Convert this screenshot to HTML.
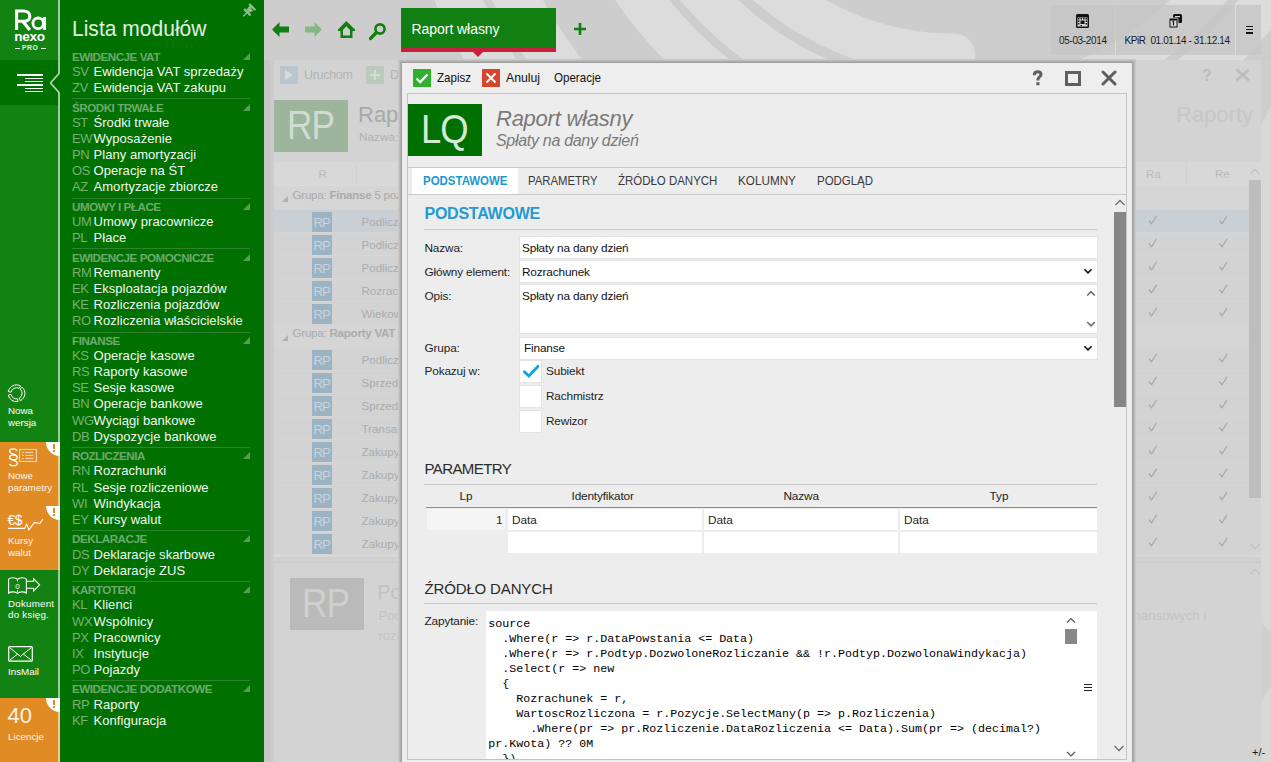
<!DOCTYPE html>
<html><head><meta charset="utf-8"><style>
html,body{margin:0;padding:0;}
body{width:1271px;height:762px;overflow:hidden;position:relative;background:#cdcdcd;font-family:"Liberation Sans",sans-serif;}
.b{position:absolute;}
.t{position:absolute;white-space:pre;}
</style></head><body>
<svg class="b" style="left:0;top:0" width="1271" height="762" viewBox="0 0 1271 762">
<rect width="1271" height="762" fill="#cdcdcd"/>
<g fill="none" stroke="#dcdcdc">
<circle cx="954" cy="-227.5" r="545.35" stroke-width="44.5"/>
<circle cx="954" cy="-227.5" r="492.4" stroke-width="45.2"/>
<circle cx="954" cy="-227.5" r="386.2" stroke-width="43.6"/>
<circle cx="954" cy="-227.5" r="334.75" stroke-width="42.5"/>
<path d="M 671.75 -227.5 A 282.25 282.25 0 0 0 954 54.75" stroke-width="42.5" stroke-linecap="round"/>
</g>
</svg><div class="b" style="left:0;top:0;width:58px;height:762px;background:#128212"></div><div class="b" style="left:0;top:60px;width:58px;height:45px;background:#007000"></div><div class="b" style="left:0;top:442px;width:58px;height:128px;background:#e08b24"></div><div class="b" style="left:0;top:698px;width:58px;height:64px;background:#e08b24"></div><div class="b" style="left:58px;top:0;width:206px;height:762px;background:#007000"></div><svg class="b" style="left:50px;top:0" width="12" height="762" viewBox="50 0 12 762">
<polyline points="59,0 59,73.5 50.5,83 59,92.5 59,762" fill="none" stroke="#acd6ac" stroke-width="1.8"/>
</svg><div class="b" style="left:58px;top:442px;width:2px;height:128px;background:#f0c89a"></div><div class="b" style="left:58px;top:698px;width:2px;height:64px;background:#f0c89a"></div><svg class="b" style="left:0;top:0" width="58" height="60" viewBox="0 0 58 60">
<g fill="none" stroke="#ffffff">
<path d="M16.6 30 V11 H23.5 C27.5 11 29.8 13.2 29.8 16.2 C29.8 19.3 27.5 21.3 23.5 21.3 H16.6" stroke-width="3.1"/>
<path d="M22.5 21 L29.8 30" stroke-width="3.2"/>
<circle cx="38.2" cy="23.3" r="5.3" stroke-width="2.8"/>
<path d="M44.6 17 V30" stroke-width="2.8"/>
</g>
</svg><div class="t" style="left:14.2px;top:28.29px;font-size:13.6px;line-height:17px;color:#ffffff;font-weight:700;font-style:normal;font-family:'Liberation Sans';letter-spacing:-0.25px;">nexo</div><div class="b" style="left:15px;top:48px;width:5px;height:1px;background:#e8f3e8"></div><div class="b" style="left:41px;top:48px;width:5px;height:1px;background:#e8f3e8"></div><div class="t" style="left:22px;top:44.34px;font-size:6.8px;line-height:8px;color:#e8f3e8;font-weight:700;font-style:normal;font-family:'Liberation Sans';letter-spacing:0.5px;">PRO</div><div class="b" style="left:17px;top:74px;width:26px;height:2px;background:#ffffff"></div><div class="b" style="left:25px;top:78px;width:18px;height:1px;background:#ffffff"></div><div class="b" style="left:25px;top:81px;width:18px;height:1px;background:#ffffff"></div><div class="b" style="left:17px;top:84px;width:26px;height:2px;background:#ffffff"></div><div class="b" style="left:25px;top:88px;width:18px;height:1px;background:#ffffff"></div><div class="b" style="left:25px;top:91px;width:18px;height:1px;background:#ffffff"></div><div class="t" style="left:8px;top:405.20px;font-size:9.8px;line-height:12px;color:#ffffff;font-weight:400;font-style:normal;font-family:'Liberation Sans';">Nowa</div><div class="t" style="left:8px;top:417.20px;font-size:9.8px;line-height:12px;color:#ffffff;font-weight:400;font-style:normal;font-family:'Liberation Sans';">wersja</div><div class="t" style="left:8px;top:469.60px;font-size:9.8px;line-height:12px;color:#fff3e6;font-weight:400;font-style:normal;font-family:'Liberation Sans';">Nowe</div><div class="t" style="left:8px;top:481.60px;font-size:9.8px;line-height:12px;color:#fff3e6;font-weight:400;font-style:normal;font-family:'Liberation Sans';">parametry</div><div class="t" style="left:8px;top:534.60px;font-size:9.8px;line-height:12px;color:#fff3e6;font-weight:400;font-style:normal;font-family:'Liberation Sans';">Kursy</div><div class="t" style="left:8px;top:546.60px;font-size:9.8px;line-height:12px;color:#fff3e6;font-weight:400;font-style:normal;font-family:'Liberation Sans';">walut</div><div class="t" style="left:8px;top:597.60px;font-size:9.8px;line-height:12px;color:#ffffff;font-weight:400;font-style:normal;font-family:'Liberation Sans';letter-spacing:0.2px;">Dokument</div><div class="t" style="left:8px;top:609.10px;font-size:9.8px;line-height:12px;color:#ffffff;font-weight:400;font-style:normal;font-family:'Liberation Sans';letter-spacing:0.2px;">do księg.</div><div class="t" style="left:8px;top:666.10px;font-size:9.8px;line-height:12px;color:#ffffff;font-weight:400;font-style:normal;font-family:'Liberation Sans';">InsMail</div><div class="t" style="left:7.5px;top:702.18px;font-size:22px;line-height:28px;color:#fff3e6;font-weight:400;font-style:normal;font-family:'Liberation Sans';">40</div><div class="t" style="left:8px;top:731.00px;font-size:9.8px;line-height:12px;color:#fff3e6;font-weight:400;font-style:normal;font-family:'Liberation Sans';">Licencje</div><div class="b" style="left:46px;top:428px;width:28px;height:28px;border-radius:50%;background:#ffffff;clip-path:inset(14px 14px 0 0)"></div><div class="b" style="left:53px;top:444px;width:2px;height:4.6px;background:#e08b24"></div><div class="b" style="left:53px;top:450px;width:2px;height:2px;background:#e08b24"></div><div class="b" style="left:46px;top:492px;width:28px;height:28px;border-radius:50%;background:#ffffff;clip-path:inset(14px 14px 0 0)"></div><div class="b" style="left:53px;top:508px;width:2px;height:4.6px;background:#e08b24"></div><div class="b" style="left:53px;top:514px;width:2px;height:2px;background:#e08b24"></div><div class="b" style="left:46px;top:684px;width:28px;height:28px;border-radius:50%;background:#ffffff;clip-path:inset(14px 14px 0 0)"></div><div class="b" style="left:53px;top:700px;width:2px;height:4.6px;background:#e08b24"></div><div class="b" style="left:53px;top:706px;width:2px;height:2px;background:#e08b24"></div><svg class="b" style="left:0;top:370px" width="58" height="400" viewBox="0 370 58 400" fill="none" stroke="#ffffff" stroke-width="1.1">
<g stroke-width="1"><path d="M8.28 391.55 A8.4 8.4 0 0 1 20.44 385.88 L19.13 388.36 A5.6 5.6 0 0 0 11.02 392.14 Z"/><path d="M22.12 387.06 A8.4 8.4 0 0 1 20.44 400.72 L19.13 398.24 A5.6 5.6 0 0 0 20.25 389.14 Z"/><path d="M17.96 401.57 A8.4 8.4 0 0 1 8.28 395.05 L11.02 394.46 A5.6 5.6 0 0 0 17.47 398.81 Z"/></g>
<path d="M17.18 450.80 C16.34 449.40 14.91 448.90 13.40 448.90 C10.88 448.90 9.62 450.10 9.62 451.60 C9.62 454.10 17.35 454.30 17.35 457.10 C17.35 458.80 15.50 459.90 13.23 459.90 C11.55 459.90 10.04 459.30 9.37 458.10" stroke-width="1.25"/><path d="M17.18 456.80 C16.34 455.40 14.91 454.90 13.40 454.90 C10.88 454.90 9.62 456.10 9.62 457.60 C9.62 460.10 17.35 460.30 17.35 463.10 C17.35 464.80 15.50 465.90 13.23 465.90 C11.55 465.90 10.04 465.30 9.37 464.10" stroke-width="1.25"/>
<rect x="19.6" y="449.4" width="16.8" height="12" stroke-width="1" stroke="#f6dcc0"/>
<path d="M22.1 452.4 h1.9 M25.2 452.4 h8.1 M22.1 455.4 h1.9 M25.2 455.4 h8.1 M22.1 458.4 h1.9 M25.2 458.4 h8.1" stroke-width="1" stroke="#f6dcc0"/>
<text x="7.6" y="525" font-family="Liberation Sans" font-size="13.8" fill="#ffffff" stroke="none" letter-spacing="-0.4">€$</text>
<path d="M8.1 528.4 H24.5 L26.6 524.3 L29 529.6 L34.5 522.4 L39.8 523.6 L43 519" stroke-width="1.1"/>
<path d="M8.6 579.2 C10.5 577.2 15.5 577.2 17.5 579.4 C19.5 577.2 24.5 577.2 26.4 579.2 V593 C24.5 591.4 19.5 591.4 17.5 593.3 C15.5 591.4 10.5 591.4 8.6 593 Z" stroke-width="1.1"/>
<path d="M17.5 580 V581.5 M17.5 590 V592" stroke-width="1"/>
<path d="M26.4 581.3 H33.6 V578.6 L39.6 584.8 L33.6 590.9 V588.3 H26.4" stroke-width="1.1"/>
<text x="15.2" y="588.6" font-family="Liberation Sans" font-size="8" fill="#ffffff" stroke="none">0</text>
<rect x="8.7" y="646.7" width="23.6" height="14.5" rx="1" stroke-width="1.2"/>
<path d="M9.6 647.6 L20.4 656.4 L31.4 647.6 M9.6 660.4 L17.6 654 M31.4 660.4 L23.4 654" stroke-width="1"/>
</svg><div class="t" style="left:72px;top:15.20px;font-size:22.5px;line-height:28px;color:#e2eee0;font-weight:400;font-style:normal;font-family:'Liberation Sans';transform:scaleX(0.935);transform-origin:0 0;">Lista modułów</div><svg class="b" style="left:230px;top:0" width="34" height="24" viewBox="230 0 34 24"><g stroke="#8cbf8c" fill="none" stroke-linecap="round"><path d="M249.8 4.6 L254.6 9.4" stroke-width="2.2"/><path d="M250.2 7.4 L249.2 10.5" stroke-width="2.6"/><path d="M244.8 9.7 L249.8 14.7" stroke-width="2.4"/><path d="M246.8 12.8 L243.6 16" stroke-width="1.4"/></g><path d="M249 6.5 L253.2 10.7 L249.5 12.5 L246.6 9.6 Z" fill="#8cbf8c"/></svg><div class="t" style="left:72px;top:49.75px;font-size:11.6px;line-height:14px;color:#6fa96f;font-weight:700;font-style:normal;font-family:'Liberation Sans';letter-spacing:-0.45px;">EWIDENCJE VAT</div><div class="b" style="left:243px;top:52.8px;width:0;height:0;border-left:7px solid transparent;border-bottom:7px solid #589c58"></div><div class="t" style="left:72px;top:64.31px;font-size:13px;line-height:16px;color:#78b078;font-weight:400;font-style:normal;font-family:'Liberation Sans';letter-spacing:-0.3px;">SV</div><div class="t" style="left:93.5px;top:64.31px;font-size:13px;line-height:16px;color:#f4f8f4;font-weight:400;font-style:normal;font-family:'Liberation Sans';letter-spacing:0.05px;">Ewidencja VAT sprzedaży</div><div class="t" style="left:72px;top:80.35px;font-size:13px;line-height:16px;color:#78b078;font-weight:400;font-style:normal;font-family:'Liberation Sans';letter-spacing:-0.3px;">ZV</div><div class="t" style="left:93.5px;top:80.35px;font-size:13px;line-height:16px;color:#f4f8f4;font-weight:400;font-style:normal;font-family:'Liberation Sans';letter-spacing:0.05px;">Ewidencja VAT zakupu</div><div class="b" style="left:72px;top:98px;width:178px;height:1px;background:#2f822f"></div><div class="t" style="left:72px;top:100.71px;font-size:11.6px;line-height:14px;color:#6fa96f;font-weight:700;font-style:normal;font-family:'Liberation Sans';letter-spacing:-0.45px;">ŚRODKI TRWAŁE</div><div class="b" style="left:243px;top:103.7px;width:0;height:0;border-left:7px solid transparent;border-bottom:7px solid #589c58"></div><div class="t" style="left:72px;top:115.27px;font-size:13px;line-height:16px;color:#78b078;font-weight:400;font-style:normal;font-family:'Liberation Sans';letter-spacing:-0.3px;">ST</div><div class="t" style="left:93.5px;top:115.27px;font-size:13px;line-height:16px;color:#f4f8f4;font-weight:400;font-style:normal;font-family:'Liberation Sans';letter-spacing:0.05px;">Środki trwałe</div><div class="t" style="left:72px;top:131.31px;font-size:13px;line-height:16px;color:#78b078;font-weight:400;font-style:normal;font-family:'Liberation Sans';letter-spacing:-0.3px;">EW</div><div class="t" style="left:93.5px;top:131.31px;font-size:13px;line-height:16px;color:#f4f8f4;font-weight:400;font-style:normal;font-family:'Liberation Sans';letter-spacing:0.05px;">Wyposażenie</div><div class="t" style="left:72px;top:147.35px;font-size:13px;line-height:16px;color:#78b078;font-weight:400;font-style:normal;font-family:'Liberation Sans';letter-spacing:-0.3px;">PN</div><div class="t" style="left:93.5px;top:147.35px;font-size:13px;line-height:16px;color:#f4f8f4;font-weight:400;font-style:normal;font-family:'Liberation Sans';letter-spacing:0.05px;">Plany amortyzacji</div><div class="t" style="left:72px;top:163.39px;font-size:13px;line-height:16px;color:#78b078;font-weight:400;font-style:normal;font-family:'Liberation Sans';letter-spacing:-0.3px;">OS</div><div class="t" style="left:93.5px;top:163.39px;font-size:13px;line-height:16px;color:#f4f8f4;font-weight:400;font-style:normal;font-family:'Liberation Sans';letter-spacing:0.05px;">Operacje na ŚT</div><div class="t" style="left:72px;top:179.43px;font-size:13px;line-height:16px;color:#78b078;font-weight:400;font-style:normal;font-family:'Liberation Sans';letter-spacing:-0.3px;">AZ</div><div class="t" style="left:93.5px;top:179.43px;font-size:13px;line-height:16px;color:#f4f8f4;font-weight:400;font-style:normal;font-family:'Liberation Sans';letter-spacing:0.05px;">Amortyzacje zbiorcze</div><div class="b" style="left:72px;top:198px;width:178px;height:1px;background:#2f822f"></div><div class="t" style="left:72px;top:199.79px;font-size:11.6px;line-height:14px;color:#6fa96f;font-weight:700;font-style:normal;font-family:'Liberation Sans';letter-spacing:-0.45px;">UMOWY I PŁACE</div><div class="b" style="left:243px;top:202.8px;width:0;height:0;border-left:7px solid transparent;border-bottom:7px solid #589c58"></div><div class="t" style="left:72px;top:214.35px;font-size:13px;line-height:16px;color:#78b078;font-weight:400;font-style:normal;font-family:'Liberation Sans';letter-spacing:-0.3px;">UM</div><div class="t" style="left:93.5px;top:214.35px;font-size:13px;line-height:16px;color:#f4f8f4;font-weight:400;font-style:normal;font-family:'Liberation Sans';letter-spacing:0.05px;">Umowy pracownicze</div><div class="t" style="left:72px;top:230.39px;font-size:13px;line-height:16px;color:#78b078;font-weight:400;font-style:normal;font-family:'Liberation Sans';letter-spacing:-0.3px;">PL</div><div class="t" style="left:93.5px;top:230.39px;font-size:13px;line-height:16px;color:#f4f8f4;font-weight:400;font-style:normal;font-family:'Liberation Sans';letter-spacing:0.05px;">Płace</div><div class="b" style="left:72px;top:248px;width:178px;height:1px;background:#2f822f"></div><div class="t" style="left:72px;top:250.75px;font-size:11.6px;line-height:14px;color:#6fa96f;font-weight:700;font-style:normal;font-family:'Liberation Sans';letter-spacing:-0.45px;">EWIDENCJE POMOCNICZE</div><div class="b" style="left:243px;top:253.8px;width:0;height:0;border-left:7px solid transparent;border-bottom:7px solid #589c58"></div><div class="t" style="left:72px;top:265.31px;font-size:13px;line-height:16px;color:#78b078;font-weight:400;font-style:normal;font-family:'Liberation Sans';letter-spacing:-0.3px;">RM</div><div class="t" style="left:93.5px;top:265.31px;font-size:13px;line-height:16px;color:#f4f8f4;font-weight:400;font-style:normal;font-family:'Liberation Sans';letter-spacing:0.05px;">Remanenty</div><div class="t" style="left:72px;top:281.35px;font-size:13px;line-height:16px;color:#78b078;font-weight:400;font-style:normal;font-family:'Liberation Sans';letter-spacing:-0.3px;">EK</div><div class="t" style="left:93.5px;top:281.35px;font-size:13px;line-height:16px;color:#f4f8f4;font-weight:400;font-style:normal;font-family:'Liberation Sans';letter-spacing:0.05px;">Eksploatacja pojazdów</div><div class="t" style="left:72px;top:297.39px;font-size:13px;line-height:16px;color:#78b078;font-weight:400;font-style:normal;font-family:'Liberation Sans';letter-spacing:-0.3px;">KE</div><div class="t" style="left:93.5px;top:297.39px;font-size:13px;line-height:16px;color:#f4f8f4;font-weight:400;font-style:normal;font-family:'Liberation Sans';letter-spacing:0.05px;">Rozliczenia pojazdów</div><div class="t" style="left:72px;top:313.43px;font-size:13px;line-height:16px;color:#78b078;font-weight:400;font-style:normal;font-family:'Liberation Sans';letter-spacing:-0.3px;">RO</div><div class="t" style="left:93.5px;top:313.43px;font-size:13px;line-height:16px;color:#f4f8f4;font-weight:400;font-style:normal;font-family:'Liberation Sans';letter-spacing:0.05px;">Rozliczenia właścicielskie</div><div class="b" style="left:72px;top:332px;width:178px;height:1px;background:#2f822f"></div><div class="t" style="left:72px;top:333.79px;font-size:11.6px;line-height:14px;color:#6fa96f;font-weight:700;font-style:normal;font-family:'Liberation Sans';letter-spacing:-0.45px;">FINANSE</div><div class="b" style="left:243px;top:336.8px;width:0;height:0;border-left:7px solid transparent;border-bottom:7px solid #589c58"></div><div class="t" style="left:72px;top:348.35px;font-size:13px;line-height:16px;color:#78b078;font-weight:400;font-style:normal;font-family:'Liberation Sans';letter-spacing:-0.3px;">KS</div><div class="t" style="left:93.5px;top:348.35px;font-size:13px;line-height:16px;color:#f4f8f4;font-weight:400;font-style:normal;font-family:'Liberation Sans';letter-spacing:0.05px;">Operacje kasowe</div><div class="t" style="left:72px;top:364.39px;font-size:13px;line-height:16px;color:#78b078;font-weight:400;font-style:normal;font-family:'Liberation Sans';letter-spacing:-0.3px;">RS</div><div class="t" style="left:93.5px;top:364.39px;font-size:13px;line-height:16px;color:#f4f8f4;font-weight:400;font-style:normal;font-family:'Liberation Sans';letter-spacing:0.05px;">Raporty kasowe</div><div class="t" style="left:72px;top:380.43px;font-size:13px;line-height:16px;color:#78b078;font-weight:400;font-style:normal;font-family:'Liberation Sans';letter-spacing:-0.3px;">SE</div><div class="t" style="left:93.5px;top:380.43px;font-size:13px;line-height:16px;color:#f4f8f4;font-weight:400;font-style:normal;font-family:'Liberation Sans';letter-spacing:0.05px;">Sesje kasowe</div><div class="t" style="left:72px;top:396.47px;font-size:13px;line-height:16px;color:#78b078;font-weight:400;font-style:normal;font-family:'Liberation Sans';letter-spacing:-0.3px;">BN</div><div class="t" style="left:93.5px;top:396.47px;font-size:13px;line-height:16px;color:#f4f8f4;font-weight:400;font-style:normal;font-family:'Liberation Sans';letter-spacing:0.05px;">Operacje bankowe</div><div class="t" style="left:72px;top:412.51px;font-size:13px;line-height:16px;color:#78b078;font-weight:400;font-style:normal;font-family:'Liberation Sans';letter-spacing:-0.3px;">WG</div><div class="t" style="left:93.5px;top:412.51px;font-size:13px;line-height:16px;color:#f4f8f4;font-weight:400;font-style:normal;font-family:'Liberation Sans';letter-spacing:0.05px;">Wyciągi bankowe</div><div class="t" style="left:72px;top:428.55px;font-size:13px;line-height:16px;color:#78b078;font-weight:400;font-style:normal;font-family:'Liberation Sans';letter-spacing:-0.3px;">DB</div><div class="t" style="left:93.5px;top:428.55px;font-size:13px;line-height:16px;color:#f4f8f4;font-weight:400;font-style:normal;font-family:'Liberation Sans';letter-spacing:0.05px;">Dyspozycje bankowe</div><div class="b" style="left:72px;top:447px;width:178px;height:1px;background:#2f822f"></div><div class="t" style="left:72px;top:448.91px;font-size:11.6px;line-height:14px;color:#6fa96f;font-weight:700;font-style:normal;font-family:'Liberation Sans';letter-spacing:-0.45px;">ROZLICZENIA</div><div class="b" style="left:243px;top:451.9px;width:0;height:0;border-left:7px solid transparent;border-bottom:7px solid #589c58"></div><div class="t" style="left:72px;top:463.47px;font-size:13px;line-height:16px;color:#78b078;font-weight:400;font-style:normal;font-family:'Liberation Sans';letter-spacing:-0.3px;">RN</div><div class="t" style="left:93.5px;top:463.47px;font-size:13px;line-height:16px;color:#f4f8f4;font-weight:400;font-style:normal;font-family:'Liberation Sans';letter-spacing:0.05px;">Rozrachunki</div><div class="t" style="left:72px;top:479.51px;font-size:13px;line-height:16px;color:#78b078;font-weight:400;font-style:normal;font-family:'Liberation Sans';letter-spacing:-0.3px;">RL</div><div class="t" style="left:93.5px;top:479.51px;font-size:13px;line-height:16px;color:#f4f8f4;font-weight:400;font-style:normal;font-family:'Liberation Sans';letter-spacing:0.05px;">Sesje rozliczeniowe</div><div class="t" style="left:72px;top:495.55px;font-size:13px;line-height:16px;color:#78b078;font-weight:400;font-style:normal;font-family:'Liberation Sans';letter-spacing:-0.3px;">WI</div><div class="t" style="left:93.5px;top:495.55px;font-size:13px;line-height:16px;color:#f4f8f4;font-weight:400;font-style:normal;font-family:'Liberation Sans';letter-spacing:0.05px;">Windykacja</div><div class="t" style="left:72px;top:511.59px;font-size:13px;line-height:16px;color:#78b078;font-weight:400;font-style:normal;font-family:'Liberation Sans';letter-spacing:-0.3px;">EY</div><div class="t" style="left:93.5px;top:511.59px;font-size:13px;line-height:16px;color:#f4f8f4;font-weight:400;font-style:normal;font-family:'Liberation Sans';letter-spacing:0.05px;">Kursy walut</div><div class="b" style="left:72px;top:530px;width:178px;height:1px;background:#2f822f"></div><div class="t" style="left:72px;top:531.95px;font-size:11.6px;line-height:14px;color:#6fa96f;font-weight:700;font-style:normal;font-family:'Liberation Sans';letter-spacing:-0.45px;">DEKLARACJE</div><div class="b" style="left:243px;top:535.0px;width:0;height:0;border-left:7px solid transparent;border-bottom:7px solid #589c58"></div><div class="t" style="left:72px;top:546.51px;font-size:13px;line-height:16px;color:#78b078;font-weight:400;font-style:normal;font-family:'Liberation Sans';letter-spacing:-0.3px;">DS</div><div class="t" style="left:93.5px;top:546.51px;font-size:13px;line-height:16px;color:#f4f8f4;font-weight:400;font-style:normal;font-family:'Liberation Sans';letter-spacing:0.05px;">Deklaracje skarbowe</div><div class="t" style="left:72px;top:562.55px;font-size:13px;line-height:16px;color:#78b078;font-weight:400;font-style:normal;font-family:'Liberation Sans';letter-spacing:-0.3px;">DY</div><div class="t" style="left:93.5px;top:562.55px;font-size:13px;line-height:16px;color:#f4f8f4;font-weight:400;font-style:normal;font-family:'Liberation Sans';letter-spacing:0.05px;">Deklaracje ZUS</div><div class="b" style="left:72px;top:581px;width:178px;height:1px;background:#2f822f"></div><div class="t" style="left:72px;top:582.91px;font-size:11.6px;line-height:14px;color:#6fa96f;font-weight:700;font-style:normal;font-family:'Liberation Sans';letter-spacing:-0.45px;">KARTOTEKI</div><div class="b" style="left:243px;top:585.9px;width:0;height:0;border-left:7px solid transparent;border-bottom:7px solid #589c58"></div><div class="t" style="left:72px;top:597.47px;font-size:13px;line-height:16px;color:#78b078;font-weight:400;font-style:normal;font-family:'Liberation Sans';letter-spacing:-0.3px;">KL</div><div class="t" style="left:93.5px;top:597.47px;font-size:13px;line-height:16px;color:#f4f8f4;font-weight:400;font-style:normal;font-family:'Liberation Sans';letter-spacing:0.05px;">Klienci</div><div class="t" style="left:72px;top:613.51px;font-size:13px;line-height:16px;color:#78b078;font-weight:400;font-style:normal;font-family:'Liberation Sans';letter-spacing:-0.3px;">WX</div><div class="t" style="left:93.5px;top:613.51px;font-size:13px;line-height:16px;color:#f4f8f4;font-weight:400;font-style:normal;font-family:'Liberation Sans';letter-spacing:0.05px;">Wspólnicy</div><div class="t" style="left:72px;top:629.55px;font-size:13px;line-height:16px;color:#78b078;font-weight:400;font-style:normal;font-family:'Liberation Sans';letter-spacing:-0.3px;">PX</div><div class="t" style="left:93.5px;top:629.55px;font-size:13px;line-height:16px;color:#f4f8f4;font-weight:400;font-style:normal;font-family:'Liberation Sans';letter-spacing:0.05px;">Pracownicy</div><div class="t" style="left:72px;top:645.59px;font-size:13px;line-height:16px;color:#78b078;font-weight:400;font-style:normal;font-family:'Liberation Sans';letter-spacing:-0.3px;">IX</div><div class="t" style="left:93.5px;top:645.59px;font-size:13px;line-height:16px;color:#f4f8f4;font-weight:400;font-style:normal;font-family:'Liberation Sans';letter-spacing:0.05px;">Instytucje</div><div class="t" style="left:72px;top:661.63px;font-size:13px;line-height:16px;color:#78b078;font-weight:400;font-style:normal;font-family:'Liberation Sans';letter-spacing:-0.3px;">PO</div><div class="t" style="left:93.5px;top:661.63px;font-size:13px;line-height:16px;color:#f4f8f4;font-weight:400;font-style:normal;font-family:'Liberation Sans';letter-spacing:0.05px;">Pojazdy</div><div class="b" style="left:72px;top:680px;width:178px;height:1px;background:#2f822f"></div><div class="t" style="left:72px;top:681.99px;font-size:11.6px;line-height:14px;color:#6fa96f;font-weight:700;font-style:normal;font-family:'Liberation Sans';letter-spacing:-0.45px;">EWIDENCJE DODATKOWE</div><div class="b" style="left:243px;top:685.0px;width:0;height:0;border-left:7px solid transparent;border-bottom:7px solid #589c58"></div><div class="t" style="left:72px;top:696.55px;font-size:13px;line-height:16px;color:#78b078;font-weight:400;font-style:normal;font-family:'Liberation Sans';letter-spacing:-0.3px;">RP</div><div class="t" style="left:93.5px;top:696.55px;font-size:13px;line-height:16px;color:#f4f8f4;font-weight:400;font-style:normal;font-family:'Liberation Sans';letter-spacing:0.05px;">Raporty</div><div class="t" style="left:72px;top:712.59px;font-size:13px;line-height:16px;color:#78b078;font-weight:400;font-style:normal;font-family:'Liberation Sans';letter-spacing:-0.3px;">KF</div><div class="t" style="left:93.5px;top:712.59px;font-size:13px;line-height:16px;color:#f4f8f4;font-weight:400;font-style:normal;font-family:'Liberation Sans';letter-spacing:0.05px;">Konfiguracja</div><svg class="b" style="left:264px;top:0" width="140" height="60" viewBox="264 0 140 60">
<path d="M272 29.5 L279.5 22 V26.5 H289 V32.5 H279.5 V37 Z" fill="#0f7f0f"/>
<path d="M322 29.5 L314.5 22 V26.5 H305 V32.5 H314.5 V37 Z" fill="#86b886"/>
<path d="M346.3 21 L355 29.5 V 31 H 352.5 V 38 H 340.5 V 31 H 338 V 29.5 Z M 343 30 V 35.5 H 350 V 30 L 346.3 26.3 Z" fill="#0f7f0f" fill-rule="evenodd"/>
<circle cx="380" cy="29" r="4.6" fill="none" stroke="#0f7f0f" stroke-width="2.6"/>
<path d="M376.5 32.5 L370.5 38.5" stroke="#0f7f0f" stroke-width="3.2" stroke-linecap="round"/>
</svg><div class="b" style="left:401px;top:8px;width:155px;height:40px;background:#117f11"></div><div class="b" style="left:401px;top:48px;width:155px;height:4px;background:#c8213f"></div><div class="b" style="left:473px;top:52px;width:0;height:0;border-left:5px solid transparent;border-right:5px solid transparent;border-top:5px solid #c8213f"></div><div class="t" style="left:411.5px;top:20.35px;font-size:14px;line-height:18px;color:#ffffff;font-weight:400;font-style:normal;font-family:'Liberation Sans';letter-spacing:-0.05px;">Raport własny</div><svg class="b" style="left:572px;top:21px" width="16" height="16"><path d="M2 8 H14 M8 2 V14" stroke="#0f7f0f" stroke-width="2.6"/></svg><div class="b" style="left:1051px;top:5px;width:64px;height:50px;background:rgba(196,196,196,0.75)"></div><div class="b" style="left:1116px;top:5px;width:119px;height:50px;background:rgba(196,196,196,0.75)"></div><div class="b" style="left:1236px;top:5px;width:25px;height:50px;background:rgba(196,196,196,0.75)"></div><svg class="b" style="left:1075px;top:13px" width="16" height="16" viewBox="0 0 16 16">
<rect x="1" y="1" width="13" height="14" rx="1.5" fill="#111"/><rect x="2.5" y="4.5" width="10" height="9" fill="#d8d8d8"/>
<g fill="#111"><rect x="3" y="5" width="1.5" height="1.5"/><rect x="5.5" y="5" width="1.5" height="1.5"/><rect x="8" y="5" width="1.5" height="1.5"/><rect x="10.5" y="5" width="1.5" height="1.5"/>
<rect x="3" y="7.5" width="1.5" height="1.5"/><rect x="5.5" y="7.5" width="4" height="3.5"/><rect x="10.5" y="7.5" width="1.5" height="1.5"/>
<rect x="3" y="10" width="1.5" height="1.5"/><rect x="10.5" y="10" width="1.5" height="1.5"/><rect x="5.5" y="12" width="1.5" height="1"/></g></svg><svg class="b" style="left:1168px;top:13px" width="16" height="16" viewBox="0 0 16 16">
<rect x="5" y="1" width="9" height="9" rx="1.5" fill="#111"/><rect x="7" y="3" width="5" height="1.2" fill="#d8d8d8"/>
<rect x="1" y="5" width="9" height="10" rx="1.5" fill="#111" stroke="#c9c9c9" stroke-width="1"/><rect x="2.5" y="7.5" width="6" height="6" fill="#d8d8d8"/>
<path d="M4.5 9 L5.5 8.3 V12.5" stroke="#111" stroke-width="1.1" fill="none"/></svg><div class="t" style="left:1059px;top:34.83px;font-size:10px;line-height:12px;color:#1a1a1a;font-weight:400;font-style:normal;font-family:'Liberation Sans';letter-spacing:-0.35px;">05-03-2014</div><div class="t" style="left:1124.5px;top:34.83px;font-size:10px;line-height:12px;color:#1a1a1a;font-weight:400;font-style:normal;font-family:'Liberation Sans';letter-spacing:-0.4px;">KPiR&nbsp; 01.01.14 - 31.12.14</div><div class="b" style="left:1246px;top:26px;width:6.5px;height:1.2px;background:#111"></div><div class="b" style="left:1246px;top:29.2px;width:6.5px;height:1.2px;background:#111"></div><div class="b" style="left:1246px;top:32.4px;width:6.5px;height:1.2px;background:#111"></div>
<div class="b" style="left:264px;top:60px;width:7px;height:702px;background:#c6c6c6"></div><div class="b" style="left:271px;top:60px;width:3px;height:702px;background:#cccccc"></div><div class="b" style="left:274px;top:60px;width:987px;height:702px;background:#d3d3d3"></div><svg class="b" style="left:1261px;top:60px" width="10" height="702" viewBox="1261 60 10 702"><rect x="1261" y="60" width="10" height="702" fill="#d8d8d8"/><polygon points="1261,60 1271,60 1271,106 1261,125" fill="#cecece"/><polygon points="1261,622 1271,633 1271,686 1261,702" fill="#cfcfcf"/></svg><div class="b" style="left:280px;top:66px;width:18px;height:18px;background:#b9c6cd"></div><div class="b" style="left:285px;top:70px;width:0;height:0;border-top:5px solid transparent;border-bottom:5px solid transparent;border-left:8px solid #d5dde2"></div><div class="t" style="left:304px;top:66.67px;font-size:12.5px;line-height:16px;color:#b4b4b4;font-weight:400;font-style:normal;font-family:'Liberation Sans';letter-spacing:-0.3px;">Uruchom</div><div class="b" style="left:366px;top:66px;width:18px;height:18px;background:#bccabc"></div><div class="b" style="left:370px;top:74px;width:10px;height:2px;background:#d5ddd5"></div><div class="b" style="left:374px;top:70px;width:2px;height:10px;background:#d5ddd5"></div><div class="t" style="left:390px;top:66.67px;font-size:12.5px;line-height:16px;color:#b4b4b4;font-weight:400;font-style:normal;font-family:'Liberation Sans';">Do</div><div class="t" style="left:1202px;top:65.96px;font-size:16px;line-height:20px;color:#bdbdbd;font-weight:700;font-style:normal;font-family:'Liberation Sans';">?</div><svg class="b" style="left:1235px;top:68px" width="16" height="14"><path d="M1.5 1.5 L14 12.5 M14 1.5 L1.5 12.5" stroke="#bdbdbd" stroke-width="2.6"/></svg><div class="b" style="left:274px;top:100px;width:74px;height:52px;background:#9db49d"></div><div class="t" style="left:287px;top:100.04px;font-size:40px;line-height:50px;color:#cfdccf;font-weight:400;font-style:normal;font-family:'Liberation Sans';letter-spacing:-1px;transform:scaleX(0.88);transform-origin:0 0;">RP</div><div class="t" style="left:358px;top:101.38px;font-size:22px;line-height:28px;color:#a9a9a9;font-weight:400;font-style:normal;font-family:'Liberation Sans';">Raporty</div><div class="t" style="left:359px;top:130.11px;font-size:11.8px;line-height:15px;color:#b0b0b0;font-weight:400;font-style:normal;font-family:'Liberation Sans';">Nazwa: (</div><div class="t" style="left:1176px;top:101.38px;font-size:22px;line-height:28px;color:#c7c7c7;font-weight:400;font-style:normal;font-family:'Liberation Sans';">Raporty</div><div class="b" style="left:274px;top:162px;width:987px;height:23px;background:#d8d8d8"></div><div class="b" style="left:274px;top:185px;width:987px;height:1px;background:#dbdbdb"></div><div class="t" style="left:318.5px;top:166.72px;font-size:11.5px;line-height:14px;color:#bababa;font-weight:400;font-style:normal;font-family:'Liberation Sans';">R</div><div class="t" style="left:1146px;top:166.72px;font-size:11.5px;line-height:14px;color:#bababa;font-weight:400;font-style:normal;font-family:'Liberation Sans';">Ra</div><div class="t" style="left:1215px;top:166.72px;font-size:11.5px;line-height:14px;color:#bababa;font-weight:400;font-style:normal;font-family:'Liberation Sans';">Re</div><div class="b" style="left:356px;top:163px;width:0;height:21px;border-left:1px dotted #cbcbcb"></div><div class="b" style="left:1186px;top:163px;width:0;height:21px;border-left:1px dotted #cbcbcb"></div><div class="b" style="left:274px;top:186px;width:975px;height:24px;background:#d5d5d5"></div><div class="b" style="left:282px;top:195.5px;width:0;height:0;border-left:6px solid transparent;border-bottom:6px solid #b0b0b0"></div><div class="t" style="left:292.5px;top:187.68px;font-size:11.6px;line-height:14px;color:#ababab;font-weight:400;font-style:normal;font-family:'Liberation Sans';letter-spacing:-0.25px;">Grupa: <b style="font-weight:700">Finanse</b> 5 pozycji</div><div class="b" style="left:274px;top:210px;width:975px;height:23px;background:#c8d0d6"></div><div class="b" style="left:274px;top:232px;width:975px;height:1px;background:#d6d6d6"></div><div class="b" style="left:312px;top:212px;width:20px;height:20px;background:#9cb3c3"></div><div class="t" style="left:313.5px;top:215.00px;font-size:13px;line-height:16px;color:#c9d5dc;font-weight:400;font-style:normal;font-family:'Liberation Sans';letter-spacing:-0.9px;">RP</div><div class="t" style="left:361.5px;top:214.78px;font-size:11.6px;line-height:14px;color:#ababab;font-weight:400;font-style:normal;font-family:'Liberation Sans';">Podliczenie</div><svg class="b" style="left:1146px;top:213px" width="84" height="14" viewBox="1146 213 84 14"><path d="M1149 220.6 L1151.6 223.8 L1156.6 215.8 M1219.5 220.6 L1222.1 223.8 L1227.1 215.8" stroke="#a3a3a3" stroke-width="1.1" fill="none"/></svg><div class="b" style="left:274px;top:255px;width:975px;height:1px;background:#d6d6d6"></div><div class="b" style="left:312px;top:235px;width:20px;height:20px;background:#9cb3c3"></div><div class="t" style="left:313.5px;top:238.00px;font-size:13px;line-height:16px;color:#c9d5dc;font-weight:400;font-style:normal;font-family:'Liberation Sans';letter-spacing:-0.9px;">RP</div><div class="t" style="left:361.5px;top:237.78px;font-size:11.6px;line-height:14px;color:#ababab;font-weight:400;font-style:normal;font-family:'Liberation Sans';">Podliczenie</div><svg class="b" style="left:1146px;top:236px" width="84" height="14" viewBox="1146 236 84 14"><path d="M1149 243.6 L1151.6 246.8 L1156.6 238.8 M1219.5 243.6 L1222.1 246.8 L1227.1 238.8" stroke="#a3a3a3" stroke-width="1.1" fill="none"/></svg><div class="b" style="left:274px;top:278px;width:975px;height:1px;background:#d6d6d6"></div><div class="b" style="left:312px;top:258px;width:20px;height:20px;background:#9cb3c3"></div><div class="t" style="left:313.5px;top:261.00px;font-size:13px;line-height:16px;color:#c9d5dc;font-weight:400;font-style:normal;font-family:'Liberation Sans';letter-spacing:-0.9px;">RP</div><div class="t" style="left:361.5px;top:260.78px;font-size:11.6px;line-height:14px;color:#ababab;font-weight:400;font-style:normal;font-family:'Liberation Sans';">Podliczenie</div><svg class="b" style="left:1146px;top:259px" width="84" height="14" viewBox="1146 259 84 14"><path d="M1149 266.6 L1151.6 269.8 L1156.6 261.8 M1219.5 266.6 L1222.1 269.8 L1227.1 261.8" stroke="#a3a3a3" stroke-width="1.1" fill="none"/></svg><div class="b" style="left:274px;top:301px;width:975px;height:1px;background:#d6d6d6"></div><div class="b" style="left:312px;top:281px;width:20px;height:20px;background:#9cb3c3"></div><div class="t" style="left:313.5px;top:284.00px;font-size:13px;line-height:16px;color:#c9d5dc;font-weight:400;font-style:normal;font-family:'Liberation Sans';letter-spacing:-0.9px;">RP</div><div class="t" style="left:361.5px;top:283.78px;font-size:11.6px;line-height:14px;color:#ababab;font-weight:400;font-style:normal;font-family:'Liberation Sans';">Rozrachunki</div><svg class="b" style="left:1146px;top:282px" width="84" height="14" viewBox="1146 282 84 14"><path d="M1149 289.6 L1151.6 292.8 L1156.6 284.8 M1219.5 289.6 L1222.1 292.8 L1227.1 284.8" stroke="#a3a3a3" stroke-width="1.1" fill="none"/></svg><div class="b" style="left:274px;top:324px;width:975px;height:1px;background:#d6d6d6"></div><div class="b" style="left:312px;top:304px;width:20px;height:20px;background:#9cb3c3"></div><div class="t" style="left:313.5px;top:307.00px;font-size:13px;line-height:16px;color:#c9d5dc;font-weight:400;font-style:normal;font-family:'Liberation Sans';letter-spacing:-0.9px;">RP</div><div class="t" style="left:361.5px;top:306.78px;font-size:11.6px;line-height:14px;color:#ababab;font-weight:400;font-style:normal;font-family:'Liberation Sans';">Wiekowanie</div><svg class="b" style="left:1146px;top:305px" width="84" height="14" viewBox="1146 305 84 14"><path d="M1149 312.6 L1151.6 315.8 L1156.6 307.8 M1219.5 312.6 L1222.1 315.8 L1227.1 307.8" stroke="#a3a3a3" stroke-width="1.1" fill="none"/></svg><div class="b" style="left:274px;top:325px;width:975px;height:24px;background:#d5d5d5"></div><div class="b" style="left:282px;top:334.5px;width:0;height:0;border-left:6px solid transparent;border-bottom:6px solid #b0b0b0"></div><div class="t" style="left:292.5px;top:325.58px;font-size:11.6px;line-height:14px;color:#ababab;font-weight:400;font-style:normal;font-family:'Liberation Sans';letter-spacing:-0.25px;">Grupa: <b style="font-weight:700">Raporty VAT</b> 9 pozycji</div><div class="b" style="left:274px;top:370px;width:975px;height:1px;background:#d6d6d6"></div><div class="b" style="left:312px;top:350px;width:20px;height:20px;background:#9cb3c3"></div><div class="t" style="left:313.5px;top:353.00px;font-size:13px;line-height:16px;color:#c9d5dc;font-weight:400;font-style:normal;font-family:'Liberation Sans';letter-spacing:-0.9px;">RP</div><div class="t" style="left:361.5px;top:352.78px;font-size:11.6px;line-height:14px;color:#ababab;font-weight:400;font-style:normal;font-family:'Liberation Sans';">Podliczenie</div><svg class="b" style="left:1146px;top:351px" width="84" height="14" viewBox="1146 351 84 14"><path d="M1149 358.6 L1151.6 361.8 L1156.6 353.8 M1219.5 358.6 L1222.1 361.8 L1227.1 353.8" stroke="#a3a3a3" stroke-width="1.1" fill="none"/></svg><div class="b" style="left:274px;top:393px;width:975px;height:1px;background:#d6d6d6"></div><div class="b" style="left:312px;top:373px;width:20px;height:20px;background:#9cb3c3"></div><div class="t" style="left:313.5px;top:376.00px;font-size:13px;line-height:16px;color:#c9d5dc;font-weight:400;font-style:normal;font-family:'Liberation Sans';letter-spacing:-0.9px;">RP</div><div class="t" style="left:361.5px;top:375.78px;font-size:11.6px;line-height:14px;color:#ababab;font-weight:400;font-style:normal;font-family:'Liberation Sans';">Sprzedaż</div><svg class="b" style="left:1146px;top:374px" width="84" height="14" viewBox="1146 374 84 14"><path d="M1149 381.6 L1151.6 384.8 L1156.6 376.8 M1219.5 381.6 L1222.1 384.8 L1227.1 376.8" stroke="#a3a3a3" stroke-width="1.1" fill="none"/></svg><div class="b" style="left:274px;top:416px;width:975px;height:1px;background:#d6d6d6"></div><div class="b" style="left:312px;top:396px;width:20px;height:20px;background:#9cb3c3"></div><div class="t" style="left:313.5px;top:399.00px;font-size:13px;line-height:16px;color:#c9d5dc;font-weight:400;font-style:normal;font-family:'Liberation Sans';letter-spacing:-0.9px;">RP</div><div class="t" style="left:361.5px;top:398.78px;font-size:11.6px;line-height:14px;color:#ababab;font-weight:400;font-style:normal;font-family:'Liberation Sans';">Sprzedaż</div><svg class="b" style="left:1146px;top:397px" width="84" height="14" viewBox="1146 397 84 14"><path d="M1149 404.6 L1151.6 407.8 L1156.6 399.8 M1219.5 404.6 L1222.1 407.8 L1227.1 399.8" stroke="#a3a3a3" stroke-width="1.1" fill="none"/></svg><div class="b" style="left:274px;top:439px;width:975px;height:1px;background:#d6d6d6"></div><div class="b" style="left:312px;top:419px;width:20px;height:20px;background:#9cb3c3"></div><div class="t" style="left:313.5px;top:422.00px;font-size:13px;line-height:16px;color:#c9d5dc;font-weight:400;font-style:normal;font-family:'Liberation Sans';letter-spacing:-0.9px;">RP</div><div class="t" style="left:361.5px;top:421.78px;font-size:11.6px;line-height:14px;color:#ababab;font-weight:400;font-style:normal;font-family:'Liberation Sans';">Transakcje</div><svg class="b" style="left:1146px;top:420px" width="84" height="14" viewBox="1146 420 84 14"><path d="M1149 427.6 L1151.6 430.8 L1156.6 422.8 M1219.5 427.6 L1222.1 430.8 L1227.1 422.8" stroke="#a3a3a3" stroke-width="1.1" fill="none"/></svg><div class="b" style="left:274px;top:462px;width:975px;height:1px;background:#d6d6d6"></div><div class="b" style="left:312px;top:442px;width:20px;height:20px;background:#9cb3c3"></div><div class="t" style="left:313.5px;top:445.00px;font-size:13px;line-height:16px;color:#c9d5dc;font-weight:400;font-style:normal;font-family:'Liberation Sans';letter-spacing:-0.9px;">RP</div><div class="t" style="left:361.5px;top:444.78px;font-size:11.6px;line-height:14px;color:#ababab;font-weight:400;font-style:normal;font-family:'Liberation Sans';">Zakupy</div><svg class="b" style="left:1146px;top:443px" width="84" height="14" viewBox="1146 443 84 14"><path d="M1149 450.6 L1151.6 453.8 L1156.6 445.8 M1219.5 450.6 L1222.1 453.8 L1227.1 445.8" stroke="#a3a3a3" stroke-width="1.1" fill="none"/></svg><div class="b" style="left:274px;top:485px;width:975px;height:1px;background:#d6d6d6"></div><div class="b" style="left:312px;top:465px;width:20px;height:20px;background:#9cb3c3"></div><div class="t" style="left:313.5px;top:468.00px;font-size:13px;line-height:16px;color:#c9d5dc;font-weight:400;font-style:normal;font-family:'Liberation Sans';letter-spacing:-0.9px;">RP</div><div class="t" style="left:361.5px;top:467.78px;font-size:11.6px;line-height:14px;color:#ababab;font-weight:400;font-style:normal;font-family:'Liberation Sans';">Zakupy</div><svg class="b" style="left:1146px;top:466px" width="84" height="14" viewBox="1146 466 84 14"><path d="M1149 473.6 L1151.6 476.8 L1156.6 468.8 M1219.5 473.6 L1222.1 476.8 L1227.1 468.8" stroke="#a3a3a3" stroke-width="1.1" fill="none"/></svg><div class="b" style="left:274px;top:508px;width:975px;height:1px;background:#d6d6d6"></div><div class="b" style="left:312px;top:488px;width:20px;height:20px;background:#9cb3c3"></div><div class="t" style="left:313.5px;top:491.00px;font-size:13px;line-height:16px;color:#c9d5dc;font-weight:400;font-style:normal;font-family:'Liberation Sans';letter-spacing:-0.9px;">RP</div><div class="t" style="left:361.5px;top:490.78px;font-size:11.6px;line-height:14px;color:#ababab;font-weight:400;font-style:normal;font-family:'Liberation Sans';">Zakupy</div><svg class="b" style="left:1146px;top:489px" width="84" height="14" viewBox="1146 489 84 14"><path d="M1149 496.6 L1151.6 499.8 L1156.6 491.8 M1219.5 496.6 L1222.1 499.8 L1227.1 491.8" stroke="#a3a3a3" stroke-width="1.1" fill="none"/></svg><div class="b" style="left:274px;top:531px;width:975px;height:1px;background:#d6d6d6"></div><div class="b" style="left:312px;top:511px;width:20px;height:20px;background:#9cb3c3"></div><div class="t" style="left:313.5px;top:514.00px;font-size:13px;line-height:16px;color:#c9d5dc;font-weight:400;font-style:normal;font-family:'Liberation Sans';letter-spacing:-0.9px;">RP</div><div class="t" style="left:361.5px;top:513.78px;font-size:11.6px;line-height:14px;color:#ababab;font-weight:400;font-style:normal;font-family:'Liberation Sans';">Zakupy</div><svg class="b" style="left:1146px;top:512px" width="84" height="14" viewBox="1146 512 84 14"><path d="M1149 519.6 L1151.6 522.8 L1156.6 514.8 M1219.5 519.6 L1222.1 522.8 L1227.1 514.8" stroke="#a3a3a3" stroke-width="1.1" fill="none"/></svg><div class="b" style="left:274px;top:554px;width:975px;height:1px;background:#d6d6d6"></div><div class="b" style="left:312px;top:534px;width:20px;height:20px;background:#9cb3c3"></div><div class="t" style="left:313.5px;top:537.00px;font-size:13px;line-height:16px;color:#c9d5dc;font-weight:400;font-style:normal;font-family:'Liberation Sans';letter-spacing:-0.9px;">RP</div><div class="t" style="left:361.5px;top:536.78px;font-size:11.6px;line-height:14px;color:#ababab;font-weight:400;font-style:normal;font-family:'Liberation Sans';">Zakupy</div><svg class="b" style="left:1146px;top:535px" width="84" height="14" viewBox="1146 535 84 14"><path d="M1149 542.6 L1151.6 545.8 L1156.6 537.8 M1219.5 542.6 L1222.1 545.8 L1227.1 537.8" stroke="#a3a3a3" stroke-width="1.1" fill="none"/></svg><div class="b" style="left:1249px;top:180px;width:12px;height:318px;background:#bdbdbd"></div><svg class="b" style="left:1249px;top:166px" width="12" height="10"><path d="M1.5 8 L6 3.5 L10.5 8" stroke="#c2c2c2" stroke-width="1.3" fill="none"/></svg><svg class="b" style="left:1249px;top:542px" width="12" height="10"><path d="M1.5 2 L6 6.5 L10.5 2" stroke="#c2c2c2" stroke-width="1.3" fill="none"/></svg><svg class="b" style="left:1249px;top:566px" width="12" height="10"><path d="M1.5 8 L6 3.5 L10.5 8" stroke="#c2c2c2" stroke-width="1.3" fill="none"/></svg><div class="b" style="left:274px;top:555px;width:987px;height:8px;background:#d0d0d0"></div><div class="b" style="left:274px;top:555px;width:987px;height:1.5px;background:#d8d8d8"></div><div class="b" style="left:274px;top:562px;width:987px;height:1px;background:#c8c8c8"></div><div class="b" style="left:290px;top:578px;width:74px;height:52px;background:#bababa"></div><div class="t" style="left:302px;top:577.94px;font-size:40px;line-height:50px;color:#cfcfcf;font-weight:400;font-style:normal;font-family:'Liberation Sans';letter-spacing:-1px;transform:scaleX(0.88);transform-origin:0 0;">RP</div><div class="t" style="left:377.5px;top:579.94px;font-size:19.5px;line-height:24px;color:#c1c1c1;font-weight:400;font-style:normal;font-family:'Liberation Sans';">Podliczenie</div><div class="t" style="left:378.5px;top:608.30px;font-size:13px;line-height:16px;color:#c4c4c4;font-weight:400;font-style:normal;font-family:'Liberation Sans';">Podliczenie sprzedaży i zakupów finansowych i</div><div class="t" style="left:1127px;top:608.00px;font-size:13px;line-height:16px;color:#c4c4c4;font-weight:400;font-style:normal;font-family:'Liberation Sans';letter-spacing:0.1px;">finansowych i</div><div class="t" style="left:378.5px;top:628.20px;font-size:13px;line-height:16px;color:#c4c4c4;font-weight:400;font-style:normal;font-family:'Liberation Sans';">rozrachunków</div><div class="t" style="left:1252px;top:745.19px;font-size:11px;line-height:14px;color:#1a1a1a;font-weight:400;font-style:normal;font-family:'Liberation Sans';">+/-</div>
<div class="b" style="left:402px;top:63px;width:730px;height:699px;box-shadow:0 0 0 1px #9e9e9e, 0 0 0 2px #afafaf, 0 0 0 3px #bdbdbd, 0 0 0 4px #c9c9c9"></div><div class="b" style="left:402px;top:63px;width:730px;height:699px;background:#eeeeee"></div><svg class="b" style="left:413px;top:69px" width="18" height="18"><rect width="18" height="18" fill="#2fb12f"/><path d="M3.5 9.5 L7.2 13 L14.5 5.5" stroke="#ffffff" stroke-width="2.4" fill="none"/></svg><div class="t" style="left:437px;top:69.90px;font-size:13px;line-height:16px;color:#111111;font-weight:400;font-style:normal;font-family:'Liberation Sans';transform:scaleX(0.89);transform-origin:0 0;">Zapisz</div><svg class="b" style="left:482px;top:69px" width="18" height="18"><rect width="18" height="18" fill="#d8452e"/><path d="M4.5 4.5 L13.5 13.5 M13.5 4.5 L4.5 13.5" stroke="#ffffff" stroke-width="2" fill="none"/></svg><div class="t" style="left:506px;top:69.90px;font-size:13px;line-height:16px;color:#111111;font-weight:400;font-style:normal;font-family:'Liberation Sans';transform:scaleX(0.94);transform-origin:0 0;">Anuluj</div><div class="t" style="left:554px;top:69.90px;font-size:13px;line-height:16px;color:#111111;font-weight:400;font-style:normal;font-family:'Liberation Sans';transform:scaleX(0.89);transform-origin:0 0;">Operacje</div><svg class="b" style="left:1030px;top:68px" width="16" height="20" viewBox="1030 68 16 20"><path d="M1034.3 75.2 C1034.3 72.6 1035.8 71.8 1037.6 71.8 C1039.6 71.8 1041 72.9 1041 74.6 C1041 76.6 1037.9 77.4 1037.9 79.5 V80.6" stroke="#5d605e" stroke-width="3" fill="none"/><rect x="1036.3" y="82.2" width="3.2" height="3" fill="#5d605e"/></svg><div class="b" style="left:1065px;top:71px;width:10px;height:9px;border:3px solid #5d605e"></div><svg class="b" style="left:1101px;top:70px" width="16" height="16"><path d="M2 2 L14 14 M14 2 L2 14" stroke="#5d605e" stroke-width="3" stroke-linecap="round"/></svg><div class="b" style="left:407px;top:93px;width:718px;height:665px;border:1px solid #c3c3c3;background:#ededed"></div><div class="b" style="left:408px;top:104px;width:74px;height:52px;background:#007000"></div><div class="t" style="left:420.5px;top:103.67px;font-size:40.5px;line-height:51px;color:#d5ead5;font-weight:400;font-style:normal;font-family:'Liberation Sans';letter-spacing:-1px;transform:scaleX(0.9);transform-origin:0 0;">LQ</div><div class="t" style="left:496px;top:104.78px;font-size:22px;line-height:28px;color:#7a7a7a;font-weight:400;font-style:italic;font-family:'Liberation Sans';letter-spacing:-0.25px;">Raport własny</div><div class="t" style="left:496px;top:130.66px;font-size:16px;line-height:20px;color:#7a7a7a;font-weight:400;font-style:italic;font-family:'Liberation Sans';letter-spacing:-0.3px;">Spłaty na dany dzień</div><div class="b" style="left:408px;top:166.5px;width:718px;height:1px;background:#c9c9c9"></div><div class="b" style="left:412px;top:167.5px;width:106px;height:26.5px;background:#ffffff"></div><div class="b" style="left:408px;top:194px;width:718px;height:1px;background:#c9c9c9"></div><div class="t" style="left:422.5px;top:173.30px;font-size:12.4px;line-height:16px;color:#1b99cd;font-weight:700;font-style:normal;font-family:'Liberation Sans';transform:scaleX(0.925);transform-origin:0 0;">PODSTAWOWE</div><div class="t" style="left:528.2px;top:173.23px;font-size:12.6px;line-height:16px;color:#3a3a3a;font-weight:400;font-style:normal;font-family:'Liberation Sans';transform:scaleX(0.9);transform-origin:0 0;">PARAMETRY</div><div class="t" style="left:617.7px;top:173.23px;font-size:12.6px;line-height:16px;color:#3a3a3a;font-weight:400;font-style:normal;font-family:'Liberation Sans';transform:scaleX(0.91);transform-origin:0 0;">ŹRÓDŁO DANYCH</div><div class="t" style="left:737.7px;top:173.23px;font-size:12.6px;line-height:16px;color:#3a3a3a;font-weight:400;font-style:normal;font-family:'Liberation Sans';transform:scaleX(0.93);transform-origin:0 0;">KOLUMNY</div><div class="t" style="left:816.7px;top:173.23px;font-size:12.6px;line-height:16px;color:#3a3a3a;font-weight:400;font-style:normal;font-family:'Liberation Sans';transform:scaleX(0.91);transform-origin:0 0;">PODGLĄD</div><svg class="b" style="left:1114px;top:197px" width="12" height="10"><path d="M1.5 8 L6 3.5 L10.5 8" stroke="#6d6d6d" stroke-width="1.3" fill="none"/></svg><div class="b" style="left:1114px;top:212px;width:12px;height:195px;background:#868686"></div><svg class="b" style="left:1113px;top:744px" width="12" height="10"><path d="M1.5 2 L6 6.5 L10.5 2" stroke="#6d6d6d" stroke-width="1.3" fill="none"/></svg><div class="t" style="left:424.5px;top:203.96px;font-size:16px;line-height:20px;color:#1f9bd1;font-weight:700;font-style:normal;font-family:'Liberation Sans';letter-spacing:-0.25px;">PODSTAWOWE</div><div class="b" style="left:424px;top:229px;width:673px;height:1px;background:#c9c9c9"></div><div class="b" style="left:519px;top:236px;width:579px;height:23px;background:#ffffff;border:1px solid #e4e4e4;box-sizing:border-box"></div><div class="t" style="left:424.5px;top:240.71px;font-size:11.8px;line-height:15px;color:#1e1e1e;font-weight:400;font-style:normal;font-family:'Liberation Sans';letter-spacing:-0.15px;">Nazwa:</div><div class="t" style="left:522px;top:240.71px;font-size:11.8px;line-height:15px;color:#111111;font-weight:400;font-style:normal;font-family:'Liberation Sans';letter-spacing:-0.15px;">Spłaty na dany dzień</div><div class="b" style="left:519px;top:260px;width:579px;height:23px;background:#ffffff;border:1px solid #e4e4e4;box-sizing:border-box"></div><div class="t" style="left:424.5px;top:264.71px;font-size:11.8px;line-height:15px;color:#1e1e1e;font-weight:400;font-style:normal;font-family:'Liberation Sans';letter-spacing:-0.15px;">Główny element:</div><div class="t" style="left:522px;top:264.71px;font-size:11.8px;line-height:15px;color:#111111;font-weight:400;font-style:normal;font-family:'Liberation Sans';letter-spacing:-0.15px;">Rozrachunek</div><svg class="b" style="left:1081.5px;top:266px" width="12" height="10"><path d="M2.4 3.2 L6 6.8 L9.6 3.2" stroke="#111" stroke-width="1.6" fill="none"/></svg><div class="b" style="left:519px;top:284px;width:579px;height:50px;background:#ffffff;border:1px solid #e4e4e4;box-sizing:border-box"></div><div class="t" style="left:424.5px;top:288.71px;font-size:11.8px;line-height:15px;color:#1e1e1e;font-weight:400;font-style:normal;font-family:'Liberation Sans';letter-spacing:-0.15px;">Opis:</div><div class="t" style="left:522px;top:288.71px;font-size:11.8px;line-height:15px;color:#111111;font-weight:400;font-style:normal;font-family:'Liberation Sans';letter-spacing:-0.15px;">Spłaty na dany dzień</div><svg class="b" style="left:1085px;top:289px" width="12" height="10"><path d="M2.2 6.5 L6 2.7 L9.8 6.5" stroke="#6e6e6e" stroke-width="1.7" fill="none"/></svg><svg class="b" style="left:1085px;top:319px" width="12" height="10"><path d="M2.2 3 L6 6.8 L9.8 3" stroke="#6e6e6e" stroke-width="1.7" fill="none"/></svg><div class="b" style="left:519px;top:337px;width:579px;height:23px;background:#ffffff;border:1px solid #e4e4e4;box-sizing:border-box"></div><div class="t" style="left:424.5px;top:340.71px;font-size:11.8px;line-height:15px;color:#1e1e1e;font-weight:400;font-style:normal;font-family:'Liberation Sans';letter-spacing:-0.15px;">Grupa:</div><div class="t" style="left:524px;top:340.71px;font-size:11.8px;line-height:15px;color:#111111;font-weight:400;font-style:normal;font-family:'Liberation Sans';letter-spacing:-0.15px;">Finanse</div><svg class="b" style="left:1081.5px;top:343px" width="12" height="10"><path d="M2.4 3.2 L6 6.8 L9.6 3.2" stroke="#111" stroke-width="1.6" fill="none"/></svg><div class="t" style="left:424.5px;top:364.41px;font-size:11.8px;line-height:15px;color:#1e1e1e;font-weight:400;font-style:normal;font-family:'Liberation Sans';letter-spacing:-0.15px;">Pokazuj w:</div><div class="b" style="left:519px;top:360px;width:23px;height:23px;background:#ffffff;border:1px solid #e4e4e4;box-sizing:border-box"></div><div class="t" style="left:546px;top:364.41px;font-size:11.8px;line-height:15px;color:#1e1e1e;font-weight:400;font-style:normal;font-family:'Liberation Sans';letter-spacing:-0.15px;">Subiekt</div><div class="b" style="left:519px;top:385px;width:23px;height:23px;background:#ffffff;border:1px solid #e4e4e4;box-sizing:border-box"></div><div class="t" style="left:546px;top:389.41px;font-size:11.8px;line-height:15px;color:#1e1e1e;font-weight:400;font-style:normal;font-family:'Liberation Sans';letter-spacing:-0.15px;">Rachmistrz</div><div class="b" style="left:519px;top:410px;width:23px;height:23px;background:#ffffff;border:1px solid #e4e4e4;box-sizing:border-box"></div><div class="t" style="left:546px;top:414.41px;font-size:11.8px;line-height:15px;color:#1e1e1e;font-weight:400;font-style:normal;font-family:'Liberation Sans';letter-spacing:-0.15px;">Rewizor</div><svg class="b" style="left:520px;top:361px" width="21" height="21"><path d="M4.4 10.9 L8.9 15 L17.9 5.4" stroke="#14a3dc" stroke-width="2.9" fill="none" stroke-linecap="round"/></svg><div class="t" style="left:424.5px;top:459.30px;font-size:15px;line-height:19px;color:#2a2a2a;font-weight:400;font-style:normal;font-family:'Liberation Sans';letter-spacing:-0.6px;">PARAMETRY</div><div class="b" style="left:424px;top:484px;width:673px;height:1px;background:#c9c9c9"></div><div class="t" style="left:459.5px;top:489.11px;font-size:11.8px;line-height:15px;color:#1e1e1e;font-weight:400;font-style:normal;font-family:'Liberation Sans';">Lp</div><div class="t" style="left:571.5px;top:489.11px;font-size:11.8px;line-height:15px;color:#1e1e1e;font-weight:400;font-style:normal;font-family:'Liberation Sans';letter-spacing:-0.15px;">Identyfikator</div><div class="t" style="left:783.5px;top:489.11px;font-size:11.8px;line-height:15px;color:#1e1e1e;font-weight:400;font-style:normal;font-family:'Liberation Sans';letter-spacing:-0.15px;">Nazwa</div><div class="t" style="left:989.5px;top:489.11px;font-size:11.8px;line-height:15px;color:#1e1e1e;font-weight:400;font-style:normal;font-family:'Liberation Sans';">Typ</div><div class="b" style="left:426px;top:507px;width:671px;height:1px;background:#8c8c8c"></div><div class="b" style="left:427px;top:509px;width:78px;height:21px;background:#f5f5f5"></div><div class="t" style="left:496px;top:512.71px;font-size:11.8px;line-height:15px;color:#1e1e1e;font-weight:400;font-style:normal;font-family:'Liberation Sans';">1</div><div class="b" style="left:508px;top:509px;width:194px;height:21px;background:#ffffff"></div><div class="b" style="left:508px;top:532px;width:194px;height:21px;background:#ffffff"></div><div class="b" style="left:704px;top:509px;width:194px;height:21px;background:#ffffff"></div><div class="b" style="left:704px;top:532px;width:194px;height:21px;background:#ffffff"></div><div class="b" style="left:900px;top:509px;width:197px;height:21px;background:#ffffff"></div><div class="b" style="left:900px;top:532px;width:197px;height:21px;background:#ffffff"></div><div class="t" style="left:512px;top:512.71px;font-size:11.8px;line-height:15px;color:#1e1e1e;font-weight:400;font-style:normal;font-family:'Liberation Sans';">Data</div><div class="t" style="left:708px;top:512.71px;font-size:11.8px;line-height:15px;color:#1e1e1e;font-weight:400;font-style:normal;font-family:'Liberation Sans';">Data</div><div class="t" style="left:904px;top:512.71px;font-size:11.8px;line-height:15px;color:#1e1e1e;font-weight:400;font-style:normal;font-family:'Liberation Sans';">Data</div><div class="t" style="left:424.5px;top:578.60px;font-size:15px;line-height:19px;color:#2a2a2a;font-weight:400;font-style:normal;font-family:'Liberation Sans';letter-spacing:-0.15px;">ŹRÓDŁO DANYCH</div><div class="b" style="left:424px;top:603px;width:673px;height:1px;background:#c9c9c9"></div><div class="t" style="left:424.5px;top:613.61px;font-size:11.8px;line-height:15px;color:#1e1e1e;font-weight:400;font-style:normal;font-family:'Liberation Sans';letter-spacing:-0.15px;">Zapytanie:</div><div class="b" style="left:486px;top:611px;width:611px;height:148px;background:#ffffff"></div><div class="b" style="left:486px;top:611px;width:611px;height:148px;overflow:hidden"><div class="t" style="left:2.3px;top:5.99px;font-family:'Liberation Mono';font-size:11.667px;line-height:15px;color:#000">source</div><div class="t" style="left:2.3px;top:20.99px;font-family:'Liberation Mono';font-size:11.667px;line-height:15px;color:#000">  .Where(r => r.DataPowstania &lt;= Data)</div><div class="t" style="left:2.3px;top:35.99px;font-family:'Liberation Mono';font-size:11.667px;line-height:15px;color:#000">  .Where(r => r.Podtyp.DozwoloneRozliczanie &amp;&amp; !r.Podtyp.DozwolonaWindykacja)</div><div class="t" style="left:2.3px;top:50.99px;font-family:'Liberation Mono';font-size:11.667px;line-height:15px;color:#000">  .Select(r => new</div><div class="t" style="left:2.3px;top:65.99px;font-family:'Liberation Mono';font-size:11.667px;line-height:15px;color:#000">  {</div><div class="t" style="left:2.3px;top:80.99px;font-family:'Liberation Mono';font-size:11.667px;line-height:15px;color:#000">    Rozrachunek = r,</div><div class="t" style="left:2.3px;top:95.99px;font-family:'Liberation Mono';font-size:11.667px;line-height:15px;color:#000">    WartoscRozliczona = r.Pozycje.SelectMany(p => p.Rozliczenia)</div><div class="t" style="left:2.3px;top:110.99px;font-family:'Liberation Mono';font-size:11.667px;line-height:15px;color:#000">      .Where(pr => pr.Rozliczenie.DataRozliczenia &lt;= Data).Sum(pr => (decimal?)</div><div class="t" style="left:2.3px;top:125.99px;font-family:'Liberation Mono';font-size:11.667px;line-height:15px;color:#000">pr.Kwota) ?? 0M</div><div class="t" style="left:2.3px;top:140.99px;font-family:'Liberation Mono';font-size:11.667px;line-height:15px;color:#000">  })</div></div><svg class="b" style="left:1065px;top:615px" width="12" height="10"><path d="M2 7.5 L6 3.5 L10 7.5" stroke="#555" stroke-width="1.2" fill="none"/></svg><div class="b" style="left:1065px;top:629px;width:12px;height:15px;background:#888888"></div><div class="b" style="left:1084px;top:683.5px;width:8px;height:1.2px;background:#222"></div><div class="b" style="left:1084px;top:686.8px;width:8px;height:1.2px;background:#222"></div><div class="b" style="left:1084px;top:690.1px;width:8px;height:1.2px;background:#222"></div><svg class="b" style="left:1065px;top:750px" width="12" height="9"><path d="M2 2 L6 6 L10 2" stroke="#555" stroke-width="1.2" fill="none"/></svg>
</body></html>
